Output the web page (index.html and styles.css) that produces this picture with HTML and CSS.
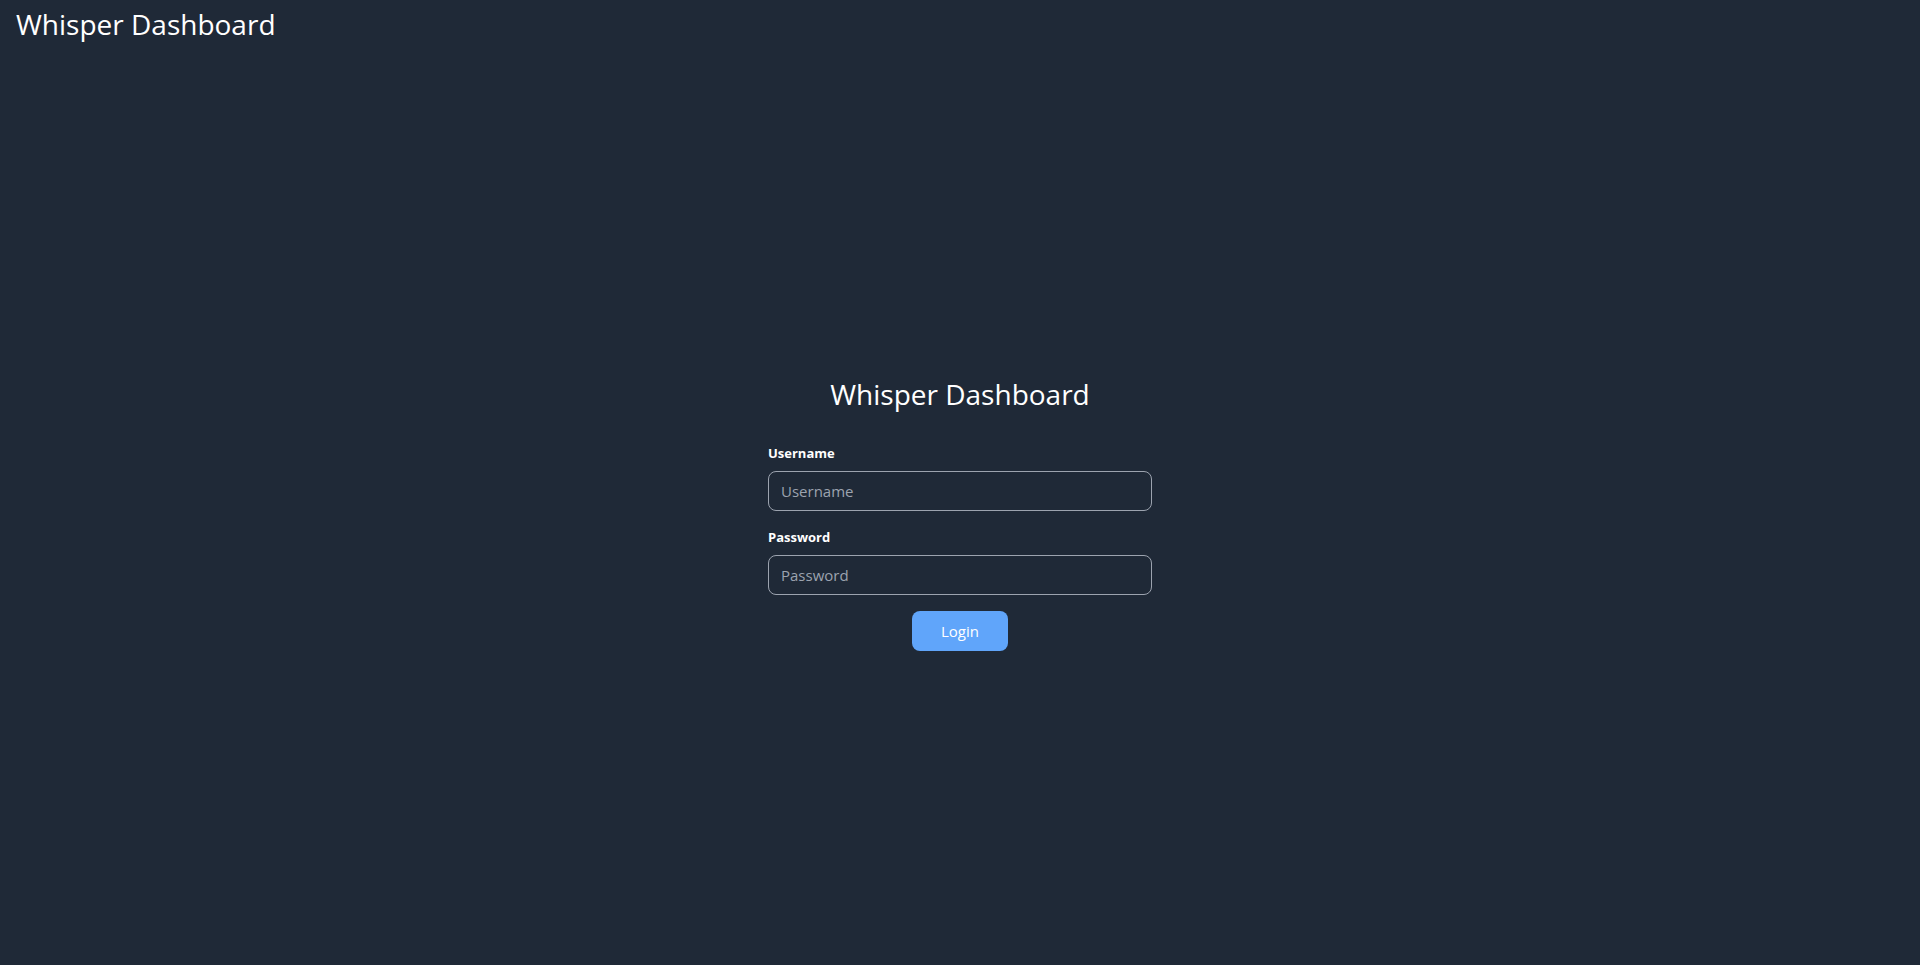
FILE: index.html
```html
<!DOCTYPE html>
<html lang="en">
<head>
<meta charset="utf-8">
<title>Whisper Dashboard</title>
<link rel="stylesheet" href="styles.css">
</head>
<body>
<header class="topbar"><h1 class="brand">Whisper Dashboard</h1></header>
<main class="center">
  <form class="login">
    <h2 class="login-title">Whisper Dashboard</h2>
    <label class="field-label" for="u">Username</label>
    <input class="field" id="u" type="text" placeholder="Username">
    <label class="field-label" for="p">Password</label>
    <input class="field" id="p" type="password" placeholder="Password">
    <div class="actions"><button class="btn" type="button">Login</button></div>
  </form>
</main>
</body>
</html>
```
FILE: styles.css
```css
html, body { margin: 0; height: 100%; }
body {
  background: #1f2937;
  color: #ffffff;
  font-family: "Open Sans", "Noto Sans", sans-serif;
  display: flex;
  flex-direction: column;
}
.topbar { padding: 4px 16px; }
.brand { margin: 0; font-size: 28px; font-weight: 400; line-height: 40px; }
.center { flex: 1; display: flex; align-items: center; justify-content: center; padding-top: 12px; }
.login { width: 384px; display: flex; flex-direction: column; }
.login-title { margin: 0 0 29px; font-size: 28px; font-weight: 400; text-align: center; line-height: 40px; }
.field-label { font-size: 13px; font-weight: 700; line-height: 20px; margin-bottom: 8px; }
.field {
  box-sizing: border-box;
  height: 40px;
  margin: 0 0 16px;
  padding: 0 12px;
  border: 1px solid #9ca3af;
  border-radius: 8px;
  background: transparent;
  color: #fff;
  font: 15px "Open Sans", sans-serif;
  outline: none;
}
.field::placeholder { color: #9ca3af; }
.actions { display: flex; justify-content: center; }
.btn {
  width: 96px; height: 40px;
  border: 0; border-radius: 8px;
  background: #60a5fa; color: #fff;
  font: 15px "Open Sans", sans-serif;
}
```
